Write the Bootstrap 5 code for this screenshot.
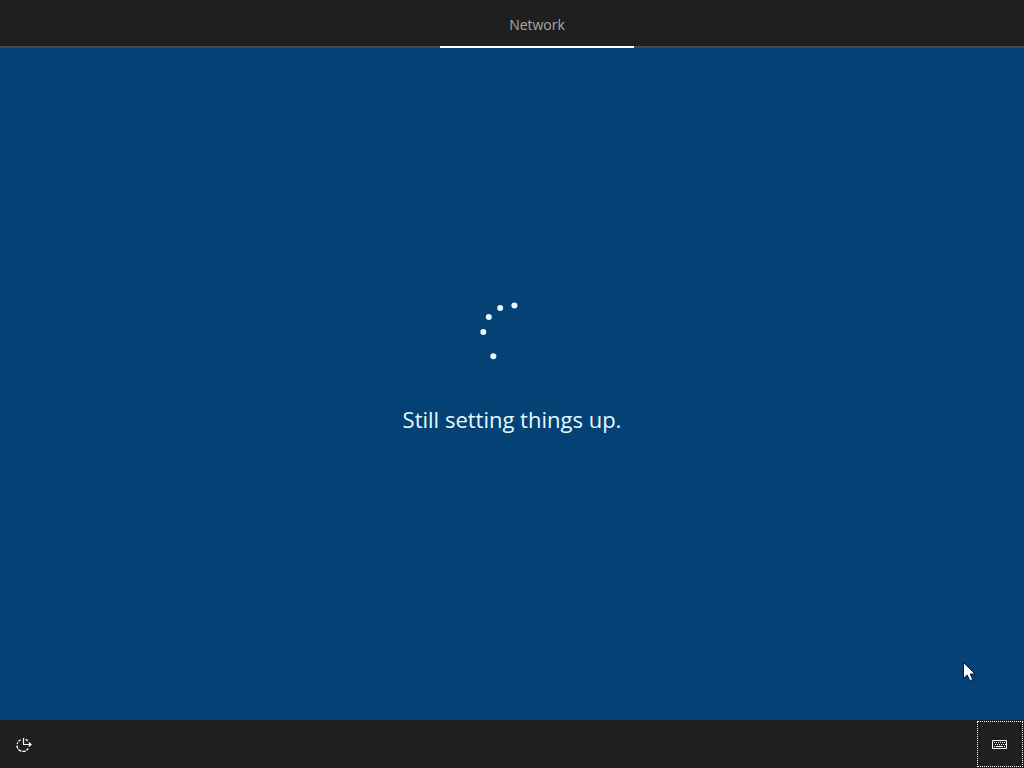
<!DOCTYPE html>
<html lang="en" class="h-100">
<head>
<meta charset="utf-8">
<meta name="viewport" content="width=device-width, initial-scale=1">
<title>Setup</title>
<link rel="stylesheet" href="https://cdn.jsdelivr.net/npm/bootstrap@5.3.0/dist/css/bootstrap.min.css">
<style>
  body { background: #044275; color: #fff; font-family: "Open Sans", "Noto Sans", sans-serif; }
  .bar { background: #1f1f1f; height: 48px; }
  .step-bar { box-shadow: inset 0 -2px #484848; padding-left: 50px; }
  .step-tab { width: 194px; color: #a9a9a9; font-size: 14px; line-height: 20px; border-bottom: 2px solid #fff; padding-top: 4px; }
  .step-tab:hover { color: #fff; }
  .stage { padding-bottom: 29px; }
  .status { font-size: 22px; line-height: 36px; margin-top: 39px; color: #e6f8ff; }
  .tool { width: 48px; height: 48px; }
  .tool-focus { width: 46px; height: 46px; margin: 1px; outline: 1px dotted #fff; outline-offset: -1px; }
  .bar .btn { padding-top: 2px; }
  .pointer { right: 46px; bottom: 36px; }
</style>
</head>
<body class="vh-100 d-flex flex-column overflow-hidden">
  <nav class="bar step-bar d-flex justify-content-center flex-shrink-0" aria-label="Setup steps">
    <a href="#network" class="step-tab d-flex align-items-center justify-content-center text-decoration-none" aria-current="step">Network</a>
  </nav>

  <main id="network" class="stage flex-grow-1 d-flex flex-column align-items-center justify-content-center position-relative">
    <svg width="64" height="60" viewBox="-2 0 64 60" fill="#e4faff" role="img" aria-label="Working">
      <circle cx="32.4" cy="3.5" r="3"/>
      <circle cx="18.2" cy="6" r="3"/>
      <circle cx="6.8" cy="15" r="3"/>
      <circle cx="1.3" cy="30" r="3"/>
      <circle cx="11.3" cy="54.2" r="3"/>
    </svg>
    <p class="status mb-0" role="status">Still setting things up.</p>
    <svg class="pointer position-absolute" width="16" height="24" viewBox="0 0 16 24" aria-hidden="true">
      <path d="M1.5 2.5V18.5L5.2 15l2.7 5.8 2.8-1.2L8.2 14h4.8z" fill="#fff" stroke="#041d35" stroke-width="1"/>
    </svg>
  </main>

  <footer class="bar d-flex justify-content-between flex-shrink-0">
    <button type="button" class="tool btn px-0 pb-0 border-0 rounded-0 d-flex align-items-center justify-content-center" aria-label="Ease of Access">
      <svg width="18" height="16" viewBox="0 0 18 16" fill="none" stroke="#fff" stroke-width="1.2">
        <path d="M8.5 1v6.5H16M13.8 5.5l2.2 2-2.2 2"/>
        <path d="M5.8 2.7A6 6 0 0 0 2.2 7" stroke-dasharray="3 1"/>
        <path d="M2 8.4A6 6 0 0 0 13.2 11.4" stroke-dasharray="3.4 .9" stroke-width="1.4"/>
        <path d="M10.5 2.4a6 6 0 0 1 2.3 1.6"/>
      </svg>
    </button>
    <button type="button" class="tool-focus btn px-0 pb-0 border-0 rounded-0 d-flex align-items-center justify-content-center" aria-label="On-screen keyboard">
      <svg width="16" height="10" viewBox="0 0 16 10" fill="none" stroke="#fff">
        <path d="M.5.5h14v8H.5z"/>
        <path d="M2 2.5h12M3 4.5h11" stroke-dasharray="1 1"/>
        <path d="M2 6.5h1M4 6.5h7M12 6.5h1"/>
      </svg>
    </button>
  </footer>
<script src="https://cdn.jsdelivr.net/npm/bootstrap@5.3.0/dist/js/bootstrap.bundle.min.js"></script>
</body>
</html>
